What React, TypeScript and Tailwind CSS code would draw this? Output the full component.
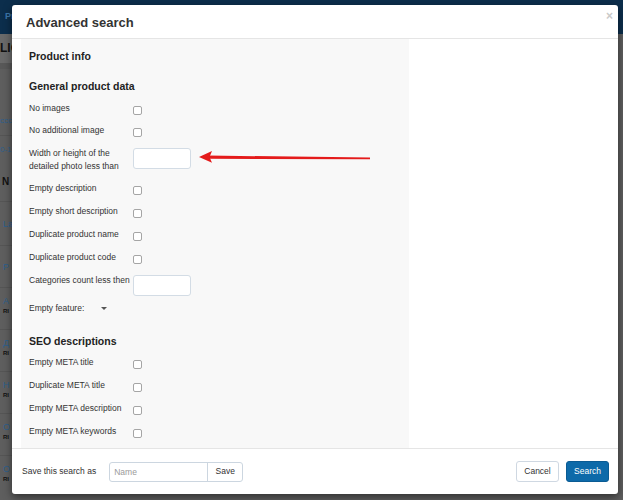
import React from "react";

const labelCls = "w-[104px] shrink-0 text-[8.5px] leading-[13px] text-[#333]";
const headingCls = "text-[10.5px] leading-[13px] font-bold text-[#222]";

const Checkbox = () => (
    <input
        type="checkbox"
        className="appearance-none mt-[4px] block w-[9px] h-[9px] border border-[#a5a5a5] rounded-[2px] bg-white"
    />
);

const SmallInput = () => (
    <input
        type="text"
        className="mt-[1px] block w-[58px] h-[21px] border border-[#d3dce5] rounded-[3px] bg-white"
    />
);

type RowProps = {
    label: React.ReactNode;
    control: React.ReactNode;
    height?: string;
};

const Row = ({ label, control, height = "h-[23px]" }: RowProps) => (
    <div className={`flex items-start ${height}`}>
        <div className={labelCls}>{label}</div>
        {control}
    </div>
);

const BackgroundStrip = () => (
    <div className="flex flex-col w-[40px]">
        <div className="h-[29px] bg-[#6a6a6a] text-[12px] leading-[29px] font-bold text-[#111] whitespace-nowrap">LIC</div>
        <div className="h-[6px] bg-[#585858]" />
        <div className="h-[38px]" />
        <div className="h-[28px] text-[8px] leading-[28px] text-[#2e5f8c] whitespace-nowrap">ccc</div>
        <div className="h-[28px] text-[8px] leading-[28px] text-[#2e5f8c] whitespace-nowrap border-t border-[#555]">0-11</div>
        <div className="h-[38px] text-[10px] leading-[38px] font-bold text-[#111] pl-[2px]">N</div>
        <div className="h-[44px] text-[9px] leading-[44px] text-[#2e5f8c] pl-[3px] border-t border-[#555]">La</div>
        <div className="h-[42px] text-[9px] leading-[42px] text-[#2e5f8c] pl-[3px] border-t border-[#555]">P</div>
        {["A", "Д", "Н", "О", "О"].map((c, i) => (
            <div key={i} className="h-[42px] pt-[8px] pl-[3px] border-t border-[#555]">
                <div className="text-[9px] leading-[11px] text-[#2e5f8c]">{c}</div>
                <div className="text-[6px] leading-[9px] font-bold text-[#111]">RI</div>
            </div>
        ))}
    </div>
);

const App = () => {
    return (
        <div className="relative w-[623px] h-[500px] overflow-hidden bg-[#5e5e5e] font-['Liberation_Sans',Arial,sans-serif]">
            {/* page behind the dialog */}
            <div className="h-[34px] bg-[#0c2e4c] flex items-center pl-[5px]">
                <span className="text-[9px] font-bold text-[#3d78ab]">Pr</span>
            </div>
            <BackgroundStrip />

            {/* dialog */}
            <div className="absolute left-[12px] top-[5px] w-[606px] h-[489px] bg-white rounded-[3px] shadow-[0_3px_9px_rgba(0,0,0,0.5)] flex flex-col">
                <div className="h-[34px] shrink-0 border-b border-[#e5e5e5] flex items-center pl-[14px] pr-[5px] pt-[2px]">
                    <h1 className="text-[13px] font-bold text-[#333]">Advanced search</h1>
                    <button className="ml-auto self-start mt-[3px] text-[12px] leading-none font-bold text-[#cacaca]">×</button>
                </div>

                <div className="flex h-[409px] shrink-0 pl-[9px]">
                    <div className="w-[388px] h-full bg-[#f8f8f8] pl-[8px] pt-[11px]">
                        <h2 className={`${headingCls} mb-[17px]`}>Product info</h2>
                        <h2 className={`${headingCls} mb-[9px]`}>General product data</h2>

                        <Row label="No images" control={<Checkbox />} height="h-[22px]" />
                        <Row label="No additional image" control={<Checkbox />} />
                        <Row
                            label={<>Width or height of the<br />detailed photo less than</>}
                            control={<SmallInput />}
                            height="h-[35px]"
                        />
                        <Row label="Empty description" control={<Checkbox />} />
                        <Row label="Empty short description" control={<Checkbox />} />
                        <Row label="Duplicate product name" control={<Checkbox />} />
                        <Row label="Duplicate product code" control={<Checkbox />} />
                        <Row label="Categories count less then" control={<SmallInput />} height="h-[28px]" />
                        <div className="flex items-start h-[23px]">
                            <span className="text-[8.5px] leading-[13px] text-[#333]">Empty feature:</span>
                            <span className="ml-[17px] mt-[5px] w-0 h-0 border-l-[3px] border-r-[3px] border-t-[3px] border-l-transparent border-r-transparent border-t-[#555]" />
                        </div>

                        <h2 className={`${headingCls} mt-[10px] mb-[8px]`}>SEO descriptions</h2>
                        <Row label="Empty META title" control={<Checkbox />} />
                        <Row label="Duplicate META title" control={<Checkbox />} />
                        <Row label="Empty META description" control={<Checkbox />} />
                        <Row label="Empty META keywords" control={<Checkbox />} />
                    </div>
                    <div className="flex-1" />
                </div>

                <div className="flex-1 border-t border-[#e5e5e5] flex items-center pl-[10px] pr-[9px]">
                    <span className="text-[8.5px] text-[#333]">Save this search as</span>
                    <div className="ml-[13px] flex h-[20px] border border-[#ccd6e0] rounded-[3px] bg-white">
                        <input
                            type="text"
                            placeholder="Name"
                            className="w-[97px] h-full px-[4px] text-[8.5px] text-[#333] placeholder:text-[#9a9a9a] outline-none bg-transparent"
                        />
                        <button className="w-[35px] h-full border-l border-[#ccd6e0] text-[8.5px] text-[#333]">Save</button>
                    </div>
                    <button className="ml-auto w-[43px] h-[21px] border border-[#cfd8e2] rounded-[3px] bg-white text-[8.5px] text-[#333]">Cancel</button>
                    <button className="ml-[7px] w-[43px] h-[21px] border border-[#0a5b93] rounded-[3px] bg-[#0d6aa9] text-[8.5px] text-white">Search</button>
                </div>

                {/* red annotation arrow */}
                <svg className="absolute left-[185px] top-[145px]" width="176" height="14" viewBox="0 0 176 14">
                    <polygon points="11,5.6 173,7.4 173,9.2 11,8.8" fill="#e41b1b" />
                    <polygon points="2,6.9 15,1 12.5,7 15,12.8" fill="#e41b1b" />
                </svg>
            </div>
        </div>
    );
};

export default App;
